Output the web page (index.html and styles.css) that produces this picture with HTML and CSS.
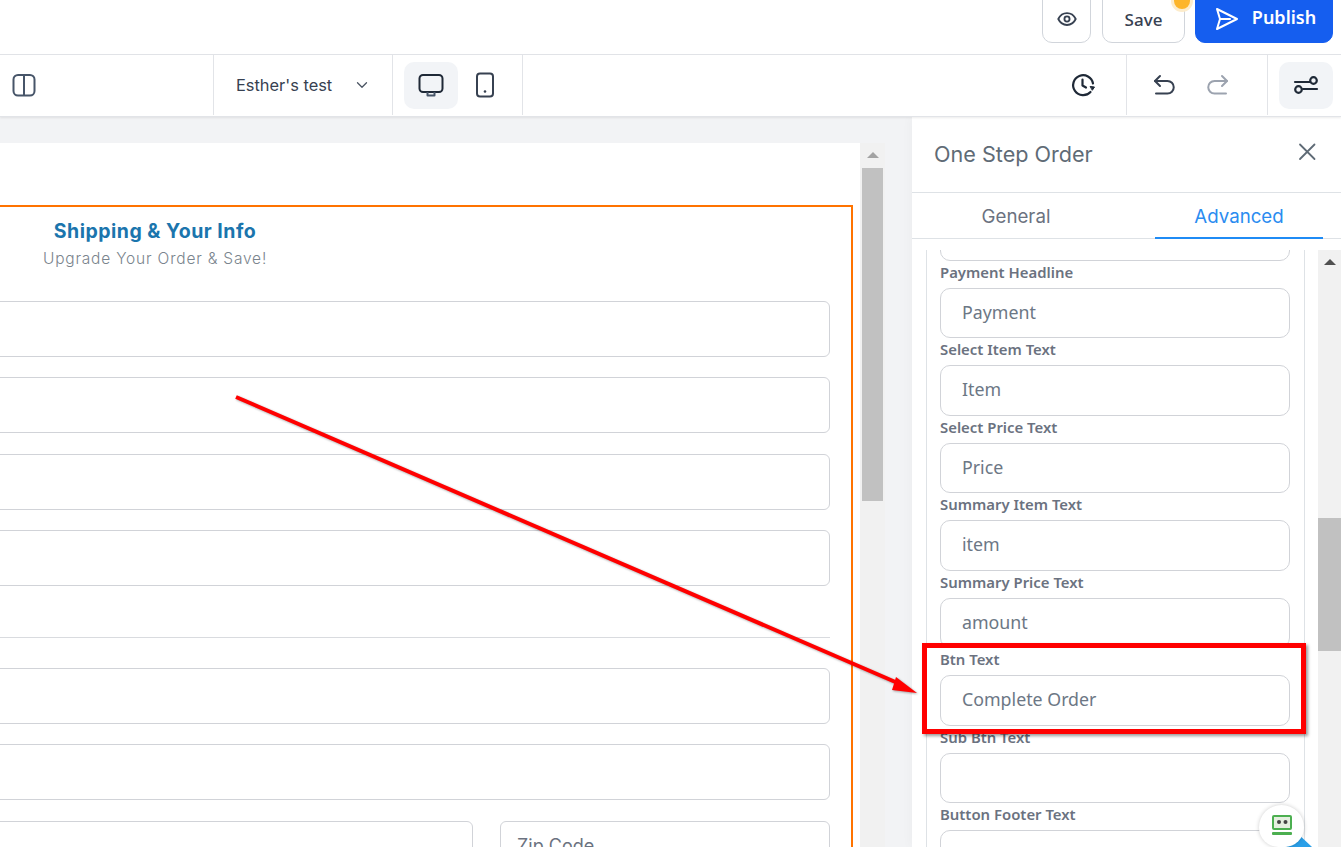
FILE: index.html
```html
<!DOCTYPE html>
<html lang="en">
<head>
    <meta charset="UTF-8">
    <meta name="viewport" content="width=device-width, initial-scale=1.0">
    <title>One Step Order</title>
    <link rel="stylesheet" href="styles.css">
</head>
<body>
    <!-- top bar -->
    <header class="topbar">
        <button class="btn btn-icon">
            <svg width="22" height="22" viewBox="0 0 24 24" fill="none" stroke="#374151" stroke-width="2" stroke-linecap="round" stroke-linejoin="round"><path d="M2.5 12C4.5 7.8 8 5.5 12 5.5s7.5 2.300 9.500 6.500c-2 4.200-5.500 6.500-9.500 6.500S4.500 16.200 2.500 12z"/><circle cx="12" cy="12" r="2.800"/></svg>
        </button>
        <div class="save-wrap">
            <button class="btn btn-save">Save</button>
            <span class="save-dot"></span>
        </div>
        <button class="btn btn-publish">
            <svg width="26" height="26" viewBox="0 0 26 26" fill="none" stroke="#fff" stroke-width="2" stroke-linejoin="round" stroke-linecap="round"><path d="M3 3l20 10L3 23l3-10z"/><path d="M6 13h10"/></svg>
            <span>Publish</span>
        </button>
    </header>

    <!-- tool bar -->
    <nav class="toolbar">
        <div class="tool-left">
            <svg width="24" height="24" viewBox="0 0 24 24" fill="none" stroke="#475569" stroke-width="2"><rect x="1.500" y="2" width="21" height="20.500" rx="4.500"/><path d="M12 2v20.500"/></svg>
        </div>
        <div class="tool-select">
            <span>Esther's test</span>
            <svg width="12" height="12" viewBox="0 0 12 12" fill="none" stroke="#4b5563" stroke-width="1.300" stroke-linecap="round" stroke-linejoin="round"><path d="M1.500 3.800L6 8.200l4.500-4.400"/></svg>
        </div>
        <div class="tool-devices">
            <span class="tool-btn active">
                <svg width="26" height="24" viewBox="0 0 26 24" fill="none" stroke="#1f2937" stroke-width="2" stroke-linejoin="round"><rect x="1.500" y="2" width="23" height="17" rx="3.500"/><path d="M9.500 19v3.500h7V19" stroke="#475569"/></svg>
            </span>
            <span class="tool-btn">
                <svg width="20" height="26" viewBox="0 0 20 26" fill="none" stroke="#374151" stroke-width="2"><rect x="2" y="1.500" width="16" height="23" rx="3"/><circle cx="10" cy="19.500" r="1.300" fill="#374151" stroke="none"/></svg>
            </span>
        </div>
        <div class="tool-spacer"></div>
        <div class="tool-history">
            <svg width="26" height="26" viewBox="0 0 26 26" fill="none" stroke="#1f2937" stroke-width="2.200" stroke-linecap="round" stroke-linejoin="round"><path d="M23 11.500A10 10 0 1 0 20.500 20"/><path d="M12.500 7.500v6l3.500 2"/><path d="M20.500 14.500l4 .5-2 3z" fill="#1f2937" stroke-width="1"/></svg>
        </div>
        <div class="tool-undo">
            <svg width="24" height="24" viewBox="0 0 24 24" fill="none" stroke="#374151" stroke-width="2" stroke-linecap="round" stroke-linejoin="round"><path d="M8 3L3 8l5 5"/><path d="M3 8h12.500a5.500 5.500 0 0 1 0 12.500H4"/></svg>
            <svg width="24" height="24" viewBox="0 0 24 24" fill="none" stroke="#9ca3af" stroke-width="2" stroke-linecap="round" stroke-linejoin="round"><path d="M16 3l5 5-5 5"/><path d="M21 8H8.500a5.500 5.500 0 0 0 0 12.500H20"/></svg>
        </div>
        <div class="tool-settings">
            <span class="tool-btn active">
                <svg width="26" height="24" viewBox="0 0 26 24" fill="none" stroke="#1f2937" stroke-width="2.200" stroke-linecap="round"><path d="M2 9h15"/><circle cx="20.500" cy="7.500" r="3.300"/><path d="M24 16H10"/><circle cx="5.500" cy="16.500" r="3.300"/></svg>
            </span>
        </div>
    </nav>

    <main class="main">
        <!-- canvas -->
        <section class="canvas">
            <div class="page">
                <div class="order-frame">
                    <h2 class="order-title">Shipping &amp; Your Info</h2>
                    <p class="order-sub">Upgrade Your Order &amp; Save!</p>
                    <div class="order-field"></div>
                    <div class="order-field"></div>
                    <div class="order-field"></div>
                    <div class="order-field"></div>
                    <hr class="order-line">
                    <div class="order-field"></div>
                    <div class="order-field"></div>
                    <div class="order-row">
                        <div class="order-field"></div>
                        <div class="order-field order-zip">Zip Code</div>
                    </div>
                </div>
            </div>
            <div class="page-scroll">
                <span class="arrow-up"></span>
                <div class="page-thumb"></div>
            </div>
        </section>

        <!-- settings panel -->
        <aside class="panel">
            <div class="panel-head">
                <h3>One Step Order</h3>
                <svg width="20" height="20" viewBox="0 0 20 20" fill="none" stroke="#5f6b76" stroke-width="1.800" stroke-linecap="round"><path d="M3 2.500l14.500 14.500M17.500 2.500L3 17"/></svg>
            </div>
            <div class="tabs">
                <div class="tab">General</div>
                <div class="tab tab-on">Advanced</div>
            </div>
            <div class="panel-scroll">
                <div class="panel-inner">
                    <div class="fields">
                        <div class="field field-cut"><div class="input"></div></div>
                        <div class="field"><label>Payment Headline</label><div class="input">Payment</div></div>
                        <div class="field"><label>Select Item Text</label><div class="input">Item</div></div>
                        <div class="field"><label>Select Price Text</label><div class="input">Price</div></div>
                        <div class="field"><label>Summary Item Text</label><div class="input">item</div></div>
                        <div class="field"><label>Summary Price Text</label><div class="input">amount</div></div>
                        <div class="field"><label>Btn Text</label><div class="input">Complete Order</div></div>
                        <div class="field"><label>Sub Btn Text</label><div class="input"></div></div>
                        <div class="field"><label>Button Footer Text</label><div class="input"></div></div>
                    </div>
                </div>
                <div class="panel-bar">
                    <span class="arrow-up dark"></span>
                    <div class="panel-thumb"></div>
                </div>
            </div>
        </aside>
    </main>

    <!-- annotation drawn over the screenshot -->
    <svg class="note-arrow" width="1341" height="847" viewBox="0 0 1341 847">
        <path d="M236 397L900 684" stroke="#ff0000" stroke-width="4" fill="none"/>
        <path d="M917 693L892 690L896 677z" fill="#ff0000"/>
    </svg>
    <div class="note-box"></div>

    <div class="chat-blue"></div>
    <div class="chat">
        <svg width="22" height="22" viewBox="0 0 22 22"><rect x="1" y="0" width="20" height="15" rx="2" fill="#4caf50"/><rect x="3" y="2" width="16" height="11" fill="#e5efe0"/><circle cx="8" cy="7" r="2" fill="#444"/><circle cx="14.500" cy="7" r="2" fill="#444"/><rect x="1" y="17" width="20" height="3" rx="1" fill="#4caf50"/></svg>
    </div>
</body>
</html>
```

FILE: styles.css
```css
* {
    box-sizing: border-box;
}
html, body {
    margin: 0;
    height: 100%;
}
body {
    width: 1341px;
    height: 847px;
    overflow: hidden;
    position: relative;
    background: #fff;
    font-family: 'Inter', sans-serif;
    color: #374151;
    display: flex;
    flex-direction: column;
}

/* top bar */
.topbar {
    height: 55px;
    flex: none;
    border-bottom: 1px solid #e2e4e8;
    display: flex;
    justify-content: flex-end;
    align-items: flex-start;
    padding-right: 8px;
    overflow: hidden;
}
.btn {
    height: 53px;
    margin-top: -10px;
    border-radius: 10px;
    border: 1px solid #d1d5db;
    background: #fff;
    font-family: 'Noto Sans', sans-serif;
    display: flex;
    align-items: center;
    justify-content: center;
}
.btn-icon {
    width: 49px;
    padding: 5px 0 0;
    margin-right: 11px;
}
.save-wrap {
    position: relative;
    margin-right: 10px;
}
.btn-save {
    width: 83px;
    padding: 5px 0 0;
    font-size: 17px;
    font-weight: 500;
    color: #374151;
}
.save-dot {
    position: absolute;
    top: -7px;
    right: -5px;
    width: 16px;
    height: 16px;
    border-radius: 50%;
    background: #fdb52a;
    box-shadow: 0 0 0 3px #fdeccb;
}
.btn-publish {
    width: 138px;
    padding: 5px 0 0 2px;
    gap: 12px;
    background: #155eef;
    border-color: #155eef;
    color: #fff;
    font-size: 18px;
    font-weight: 600;
}
.btn-publish span {
    margin-bottom: 4px;
}

/* tool bar */
.toolbar {
    height: 62px;
    flex: none;
    display: flex;
    align-items: stretch;
    padding-bottom: 1px;
    border-bottom: 1px solid #e2e4e8;
    box-shadow: 0 1px 2px rgba(0, 0, 0, 0.08);
    position: relative;
}
.toolbar > div {
    display: flex;
    align-items: center;
}
.tool-left {
    width: 214px;
    padding-left: 12px;
    border-right: 1px solid #e2e4e8;
}
.tool-select {
    width: 179px;
    padding-left: 22px;
    border-right: 1px solid #e2e4e8;
    font-size: 16.400px;
    color: #374151;
}
.tool-select svg {
    margin-left: 24px;
}
.tool-devices {
    width: 130px;
    padding-left: 11px;
    border-right: 1px solid #e2e4e8;
}
.tool-btn {
    width: 54px;
    height: 47px;
    border-radius: 10px;
    display: flex;
    align-items: center;
    justify-content: center;
}
.tool-btn.active {
    background: #f2f4f7;
}
.tool-spacer {
    flex: 1;
}
.tool-history {
    width: 85px;
    padding-left: 28px;
    border-right: 1px solid #e2e4e8;
}
.tool-undo {
    width: 141px;
    padding-left: 25px;
    gap: 30px;
    border-right: 1px solid #e2e4e8;
}
.tool-settings {
    width: 73px;
    padding-left: 11px;
}

/* canvas */
.main {
    flex: 1;
    min-height: 0;
    display: flex;
    background: #f2f3f5;
    overflow: hidden;
}
.canvas {
    width: 912px;
    flex: none;
    padding-top: 26px;
    display: flex;
    align-items: stretch;
    overflow: hidden;
}
.page {
    width: 860px;
    flex: none;
    background: #fff;
    overflow: hidden;
    padding-top: 62px;
}
.order-frame {
    width: 1400px;
    margin-left: -547px;
    border: 2px solid #ff7300;
    padding: 0 21px 0 0;
}
.order-title {
    margin: 11px 0 0;
    padding-left: 25px;
    text-align: center;
    font-family: 'Inter', sans-serif;
    font-size: 19.500px;
    line-height: 26px;
    font-weight: 700;
    letter-spacing: 0.5px;
    color: #1b75ad;
}
.order-sub {
    margin: 3px 0 30px;
    padding-left: 25px;
    text-align: center;
    font-family: 'Inter', sans-serif;
    font-size: 15.500px;
    line-height: 24px;
    font-weight: 300;
    letter-spacing: 0.8px;
    color: #7a848d;
}
.order-field {
    height: 56px;
    margin-bottom: 20.400px;
    border: 1px solid #d1d3d8;
    border-radius: 6px;
    background: #fff;
}
.order-line {
    margin: 51px 0 29.800px;
    border: none;
    border-top: 1px solid #d9dbdf;
}
.order-row {
    display: flex;
    gap: 27px;
}
.order-row .order-field {
    flex: 1;
}
.order-row .order-zip {
    flex: none;
    width: 330px;
    padding: 13px 16px;
    font-size: 18px;
    color: #6b7280;
}
.page-scroll {
    width: 25px;
    flex: none;
    background: #f1f1f1;
    padding: 0 2px;
    display: flex;
    flex-direction: column;
    align-items: center;
}
.arrow-up {
    display: block;
    width: 0;
    height: 0;
    margin: 9px 0 10px;
    border-left: 6px solid transparent;
    border-right: 6px solid transparent;
    border-bottom: 6px solid #a3a3a3;
}
.arrow-up.dark {
    border-bottom-color: #505050;
}
.page-thumb {
    width: 100%;
    height: 333px;
    background: #c1c1c1;
}

/* settings panel */
.panel {
    width: 429px;
    flex: none;
    background: #fff;
    display: flex;
    flex-direction: column;
    min-height: 0;
    box-shadow: -4px 0 8px rgba(0, 0, 0, 0.02);
}
.panel-head {
    height: 76px;
    flex: none;
    display: flex;
    align-items: center;
    justify-content: space-between;
    padding: 0 24px 0 22px;
    border-bottom: 1px solid #dee2e6;
}
.panel-head h3 {
    margin: -2px 0 0;
    font-family: 'Inter', sans-serif;
    font-size: 21.600px;
    font-weight: 400;
    color: #5f6b76;
}
.panel-head svg {
    margin-top: -6px;
}
.tabs {
    height: 46px;
    flex: none;
    display: flex;
    padding: 0 18px 0 20px;
    gap: 55px;
    border-bottom: 1px solid #dee2e6;
}
.tab {
    width: 168px;
    height: 46px;
    font-size: 18.700px;
    line-height: 47px;
    text-align: center;
    color: #6b7280;
}
.tab-on {
    color: #2b8cf0;
    border-bottom: 2px solid #1f8bf5;
}
.panel-scroll {
    flex: 1;
    min-height: 0;
    display: flex;
    margin-top: 11px;
    overflow: hidden;
}
.panel-inner {
    width: 379px;
    margin-left: 14px;
    flex: none;
    padding: 0 14px 0 13px;
    border-left: 1px solid #dee2e6;
    border-right: 1px solid #dee2e6;
    overflow: hidden;
}
.fields {
    margin-top: -39px;
}
.field-cut {
    height: 49px;
}
.field-cut .input {
    height: 50px;
}
.field label {
    display: block;
    height: 27.500px;
    padding-top: 0.500px;
    font-family: 'Noto Sans', sans-serif;
    font-size: 14.900px;
    line-height: 22px;
    font-weight: 600;
    color: #6b7280;
}
.input {
    height: 50.500px;
    margin-bottom: -0.500px;
    border: 1px solid #d1d3d8;
    border-radius: 10px;
    padding: 0 21px;
    font-family: 'Noto Sans', sans-serif;
    font-size: 17.800px;
    line-height: 47.500px;
    color: #6c7785;
}
.panel-bar {
    width: 23px;
    margin-left: 13px;
    flex: none;
    background: #f1f1f1;
    display: flex;
    flex-direction: column;
    align-items: center;
    position: relative;
}
.panel-thumb {
    position: absolute;
    top: 268px;
    left: 0;
    width: 100%;
    height: 133px;
    background: #c1c1c1;
}

/* annotation */
.note-arrow {
    position: absolute;
    top: 0;
    left: 0;
    filter: drop-shadow(1px 1px 1px rgba(0, 0, 0, 0.35));
}
.note-box {
    position: absolute;
    left: 922px;
    top: 643px;
    width: 384px;
    height: 91px;
    border: 5px solid #ff0000;
    box-shadow: 2px 2px 3px rgba(0, 0, 0, 0.4);
}
.chat-blue {
    position: absolute;
    left: 1286px;
    top: 836px;
    width: 26px;
    height: 11px;
    background: #2a9fe8;
    clip-path: polygon(0 100%, 55% 0, 100% 100%);
}
.chat {
    position: absolute;
    left: 1259px;
    top: 805px;
    width: 45px;
    height: 42px;
    border-radius: 23px 23px 20px 20px;
    background: #fff;
    box-shadow: 0 0 4px rgba(0, 0, 0, 0.2);
    display: flex;
    align-items: flex-start;
    justify-content: center;
    padding-top: 10px;
}
```
